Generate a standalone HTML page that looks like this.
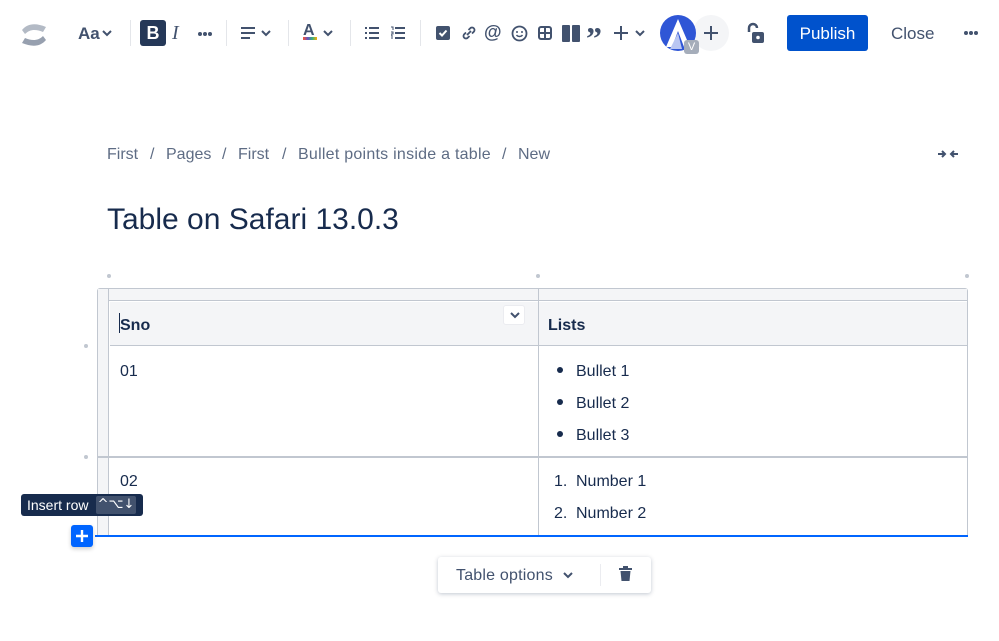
<!DOCTYPE html>
<html><head><meta charset="utf-8"><style>
*{margin:0;padding:0;box-sizing:border-box}
body{width:999px;height:641px;background:#fff;font-family:"Liberation Sans",sans-serif;color:#172b4d;position:relative;overflow:hidden}
.a{position:absolute}
.sep{position:absolute;top:20px;width:1px;height:26px;background:#e4e6ea}
.bc{position:absolute;top:146px;font-size:16px;color:#5e6c84}
.dot{position:absolute;width:4px;height:4px;border-radius:50%;background:#c1c7d0}
.t{position:absolute;font-size:16px;color:#172b4d}
.d3{position:absolute;width:4px;height:4px;border-radius:50%;background:#42526e}
</style></head><body>
<svg class="a" style="left:20px;top:21px" width="28" height="28" viewBox="0 0 28 28"><path d="M2 9 C8 2,16 2,26 6 L23 11 C16 8,10 8,5 13 Z" fill="#b3bac5"/><path d="M26 19 C20 26,12 26,2 22 L5 17 C12 20,18 20,23 15 Z" fill="#97a0af"/></svg>
<div class="a" style="left:78px;top:24px;font-size:17px;font-weight:bold;color:#42526e">Aa</div>
<svg class="a" style="left:102px;top:30px" width="10" height="8"><path d="M1 1l4 4 4-4" stroke="#42526e" stroke-width="2" fill="none"/></svg>
<div class="sep" style="left:130px"></div>
<div class="a" style="left:140px;top:20px;width:26px;height:26px;background:#253858;border-radius:3px;color:#fff;font-weight:bold;font-size:18px;text-align:center;line-height:26px">B</div>
<div class="a" style="left:172px;top:22px;font-size:20px;font-style:italic;color:#42526e;font-family:'Liberation Serif',serif">I</div>
<div class="d3" style="left:198px;top:32px"></div><div class="d3" style="left:203px;top:32px"></div><div class="d3" style="left:208px;top:32px"></div>
<div class="sep" style="left:226px"></div>
<svg class="a" style="left:241px;top:27px" width="14" height="12"><path d="M0 1h14M0 6h14M0 11h9" stroke="#42526e" stroke-width="2"/></svg>
<svg class="a" style="left:261px;top:30px" width="10" height="8"><path d="M1 1l4 4 4-4" stroke="#42526e" stroke-width="2" fill="none"/></svg>
<div class="sep" style="left:288px"></div>
<div class="a" style="left:303px;top:22px;font-size:16px;font-weight:bold;color:#42526e">A</div>
<div class="a" style="left:303px;top:37px;width:14px;height:3px;background:linear-gradient(90deg,#ff5630,#6554c0,#36b37e,#ffab00)"></div>
<svg class="a" style="left:323px;top:30px" width="10" height="8"><path d="M1 1l4 4 4-4" stroke="#42526e" stroke-width="2" fill="none"/></svg>
<div class="sep" style="left:350px"></div>
<svg class="a" style="left:365px;top:27px" width="14" height="12"><path d="M0 1h2M0 6h2M0 11h2M4 1h10M4 6h10M4 11h10" stroke="#42526e" stroke-width="2"/></svg>
<svg class="a" style="left:391px;top:26px" width="14" height="14"><path d="M4 2h10M4 7h10M4 12h10" stroke="#42526e" stroke-width="2"/><path d="M0 1h2v3M0 6h2v2h-2v2h2M0 12h2" stroke="#42526e" stroke-width="1" fill="none"/></svg>
<div class="sep" style="left:420px"></div>
<div class="a" style="left:436px;top:26px;width:14px;height:14px;background:#42526e;border-radius:2px"></div>
<svg class="a" style="left:436px;top:26px" width="14" height="14"><path d="M3.5 7l2.5 2.5 4.5-5" stroke="#fff" stroke-width="2" fill="none"/></svg>
<svg class="a" style="left:460px;top:24px" width="18" height="18"><path d="M7 11l4-4M6 8.5l-2 2a2.5 2.5 0 003.5 3.5l2-2M12 9.5l2-2a2.5 2.5 0 00-3.5-3.5l-2 2" stroke="#42526e" stroke-width="1.8" fill="none"/></svg>
<div class="a" style="left:484px;top:22px;font-size:18px;color:#42526e;font-weight:bold">@</div>
<svg class="a" style="left:511px;top:25px" width="17" height="17"><circle cx="8.5" cy="8.5" r="7" stroke="#42526e" stroke-width="1.8" fill="none"/><circle cx="6" cy="7" r="1" fill="#42526e"/><circle cx="11" cy="7" r="1" fill="#42526e"/><path d="M5.5 10a3.5 3 0 006 0" stroke="#42526e" stroke-width="1.5" fill="none"/></svg>
<svg class="a" style="left:538px;top:26px" width="14" height="14"><rect x="1" y="1" width="12" height="12" rx="2" stroke="#42526e" stroke-width="2" fill="none"/><path d="M7 1v12M1 7h12" stroke="#42526e" stroke-width="2"/></svg>
<div class="a" style="left:562px;top:25px;width:8px;height:17px;background:#42526e;border-radius:1px"></div>
<div class="a" style="left:572px;top:25px;width:8px;height:17px;background:#42526e;border-radius:1px"></div>
<div class="a" style="left:586px;top:22px;font-size:32px;font-weight:bold;color:#42526e;font-family:'Liberation Serif',serif;line-height:32px">”</div>
<svg class="a" style="left:614px;top:26px" width="14" height="14"><path d="M7 0v14M0 7h14" stroke="#42526e" stroke-width="2"/></svg>
<svg class="a" style="left:635px;top:30px" width="10" height="8"><path d="M1 1l4 4 4-4" stroke="#42526e" stroke-width="2" fill="none"/></svg>
<div class="a" style="left:693px;top:15px;width:36px;height:36px;border-radius:50%;background:#f4f5f7"></div>
<svg class="a" style="left:704px;top:26px" width="14" height="14"><path d="M7 0v14M0 7h14" stroke="#42526e" stroke-width="2"/></svg>
<div class="a" style="left:660px;top:15px;width:36px;height:36px;border-radius:50%;background:#2f56d6;overflow:hidden"><svg width="36" height="36"><path d="M18 4L30 32H24L18 16L12 32H6Z" fill="#fff"/><path d="M10 34L18 18L22 34Z" fill="#b9c6f2"/></svg></div>
<div class="a" style="left:684px;top:40px;width:15px;height:14px;background:#a5adba;border-radius:3px;color:#fff;font-size:11px;text-align:center;line-height:14px">V</div>
<svg class="a" style="left:745px;top:22px" width="20" height="22"><path d="M4 10V6a4 4 0 018 0" stroke="#42526e" stroke-width="2.5" fill="none"/><rect x="7" y="10" width="12" height="11" rx="2" fill="#42526e"/><circle cx="13" cy="15.5" r="1.8" fill="#fff"/></svg>
<div class="a" style="left:787px;top:15px;width:81px;height:36px;background:#0052cc;border-radius:3px;color:#fff;font-size:17px;text-align:center;line-height:37px">Publish</div>
<div class="a" style="left:891px;top:24px;font-size:17px;color:#42526e">Close</div>
<div class="d3" style="left:964px;top:31px"></div><div class="d3" style="left:969px;top:31px"></div><div class="d3" style="left:974px;top:31px"></div>

<div class="bc" style="left:107px">First</div>
<div class="bc" style="left:150px">/</div>
<div class="bc" style="left:166px">Pages</div>
<div class="bc" style="left:222px">/</div>
<div class="bc" style="left:238px">First</div>
<div class="bc" style="left:282px">/</div>
<div class="bc" style="left:298px;letter-spacing:0.25px">Bullet points inside a table</div>
<div class="bc" style="left:502px">/</div>
<div class="bc" style="left:518px">New</div>
<svg class="a" style="left:937px;top:148px" width="22" height="12"><path d="M1 6h7M5 3l3 3-3 3M21 6h-7M17 3l-3 3 3 3" stroke="#42526e" stroke-width="2" fill="none"/></svg>

<div class="a" style="left:107px;top:203px;font-size:30px;color:#172b4d">Table on Safari 13.0.3</div>

<div class="dot" style="left:107px;top:274px"></div>
<div class="dot" style="left:536px;top:274px"></div>
<div class="dot" style="left:965px;top:274px"></div>
<div class="dot" style="left:84px;top:344px"></div>
<div class="dot" style="left:84px;top:455px"></div>

<div class="a" style="left:97px;top:288px;width:871px;height:248px;border:1px solid #c1c7d0;border-bottom:none;border-radius:3px 3px 0 0"></div>
<div class="a" style="left:98px;top:289px;width:869px;height:12px;background:#f4f5f7;border-bottom:1px solid #c1c7d0"></div>
<div class="a" style="left:98px;top:289px;width:11px;height:246px;background:#f4f5f7;border-right:1px solid #c1c7d0"></div>
<div class="a" style="left:110px;top:302px;width:857px;height:44px;background:#f4f5f7;border-bottom:1px solid #c1c7d0"></div>
<div class="a" style="left:98px;top:456px;width:869px;height:2px;background:#c1c7d0"></div>
<div class="a" style="left:538px;top:289px;width:1px;height:246px;background:#c1c7d0"></div>
<div class="a" style="left:95px;top:535px;width:873px;height:2px;background:#0065ff"></div>
<div class="a" style="left:119px;top:313px;width:1px;height:20px;background:#172b4d"></div>
<div class="t" style="left:120px;top:317px;font-weight:bold">Sno</div>
<div class="a" style="left:503px;top:305px;width:22px;height:20px;background:#fff;border:1px solid #ebecf0;border-radius:3px"></div>
<svg class="a" style="left:510px;top:312px" width="10" height="7"><path d="M1 1l4 4 4-4" stroke="#42526e" stroke-width="2" fill="none"/></svg>
<div class="t" style="left:548px;top:317px;font-weight:bold">Lists</div>
<div class="t" style="left:120px;top:363px">01</div>
<div class="t" style="left:120px;top:473px">02</div>
<div class="a" style="left:557px;top:367px;width:6px;height:6px;border-radius:50%;background:#172b4d"></div>
<div class="a" style="left:557px;top:399px;width:6px;height:6px;border-radius:50%;background:#172b4d"></div>
<div class="a" style="left:557px;top:431px;width:6px;height:6px;border-radius:50%;background:#172b4d"></div>
<div class="t" style="left:576px;top:363px">Bullet 1</div>
<div class="t" style="left:576px;top:395px">Bullet 2</div>
<div class="t" style="left:576px;top:427px">Bullet 3</div>
<div class="t" style="left:554px;top:473px">1.</div>
<div class="t" style="left:554px;top:505px">2.</div>
<div class="t" style="left:576px;top:473px">Number 1</div>
<div class="t" style="left:576px;top:505px">Number 2</div>

<div class="a" style="left:21px;top:494px;width:122px;height:22px;background:#172b4d;border-radius:3px"></div>
<div class="a" style="left:27px;top:497px;font-size:14px;color:#fff">Insert row</div>
<div class="a" style="left:96px;top:496px;width:40px;height:18px;background:#42526e;border-radius:2px;color:#fff;font-size:13px;text-align:center;line-height:18px;font-family:'DejaVu Sans',sans-serif">^⌥↓</div>
<div class="a" style="left:71px;top:525px;width:22px;height:22px;background:#0065ff;border-radius:3px;box-shadow:0 2px 4px rgba(0,0,0,.2)"></div>
<svg class="a" style="left:75px;top:529px" width="14" height="14"><path d="M7 1v12M1 7h12" stroke="#fff" stroke-width="2.4"/></svg>

<div class="a" style="left:438px;top:557px;width:213px;height:36px;background:#fff;border-radius:3px;box-shadow:0 1px 4px rgba(9,30,66,.25)"></div>
<div class="a" style="left:456px;top:567px;font-size:16px;color:#42526e;letter-spacing:0.2px">Table options</div>
<svg class="a" style="left:563px;top:572px" width="10" height="7"><path d="M1 1l4 4 4-4" stroke="#42526e" stroke-width="2" fill="none"/></svg>
<div class="a" style="left:600px;top:564px;width:1px;height:22px;background:#ebecf0"></div>
<svg class="a" style="left:618px;top:566px" width="15" height="16"><path d="M1 3h13" stroke="#42526e" stroke-width="2"/><rect x="5" y="0" width="5" height="2" fill="#42526e"/><path d="M2.5 5h10l-1 10h-8z" fill="#42526e"/></svg>
</body></html>
